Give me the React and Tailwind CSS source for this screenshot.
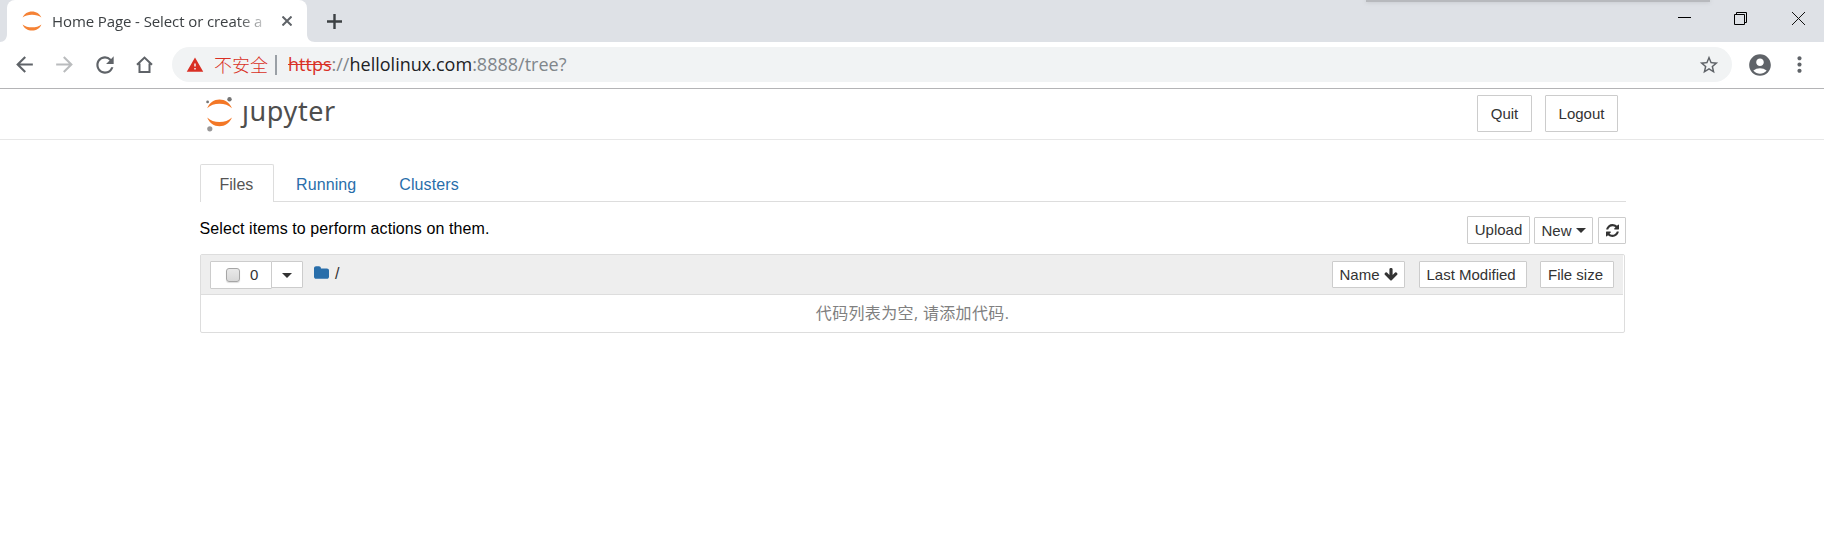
import React from "react";
import {
  MdArrowBack,
  MdArrowForward,
  MdRefresh,
  MdWarning,
  MdStarBorder,
  MdAccountCircle,
  MdMoreVert,
} from "react-icons/md";

const JupyterArcs = ({ className }) => (
  <svg viewBox="0 0 20 20" className={className} fill="#f58235">
    <path d="M0.6 6.6C2.2 2.6 5.8 0.4 10 0.4s7.8 2.2 9.4 6.2C17 4.6 13.800 3.700 10 3.700S3 4.600 0.600 6.600z" />
    <path d="M0.6 13.400C2.200 17.400 5.800 19.600 10 19.600s7.800-2.200 9.400-6.200C17 15.400 13.800 16.300 10 16.300S3 15.400 0.600 13.400z" />
  </svg>
);

const Caret = () => (
  <svg viewBox="0 0 10 5" className="mt-px h-[5px] w-[10px]" fill="#333">
    <path d="M0 0h10L5 5z" />
  </svg>
);

const Button = ({ className, children }) => (
  <button
    className={
      "flex shrink-0 items-center rounded-[1px] border border-[#ccc] bg-white text-[15px] leading-none text-[#333] " +
      className
    }
  >
    {children}
  </button>
);

function TabStrip() {
  return (
    <div className="relative flex h-[42px] bg-[#dee1e6]">
      <div className="absolute top-0 left-[1366px] h-[2px] w-[344px] bg-[#b7b9bd] shadow-[0_0_4px_#b7b9bd]" />
      <svg viewBox="0 0 7 8" className="mt-[34px] h-[8px] w-[7px]" fill="#fff">
        <path d="M7 0v8H0c4 0 7-3 7-8z" />
      </svg>
      <div className="flex h-[42px] w-[300px] items-center rounded-t-[8px] bg-white">
        <JupyterArcs className="ml-[15px] h-[20px] w-[20px]" />
        <div className="ml-[10px] w-[221px] overflow-hidden font-['Open_Sans',sans-serif] text-[15px] leading-[22px] tracking-[-0.1px] whitespace-nowrap text-[#3c4043] [mask-image:linear-gradient(to_right,#000_185px,transparent_221px)]">
          Home Page - Select or create a
        </div>
        <svg viewBox="0 0 10 10" className="ml-[9px] h-[10px] w-[10px]" stroke="#5f6368" strokeWidth="2">
          <path d="M0.500 0.500l9 9M9.500 0.500l-9 9" />
        </svg>
      </div>
      <svg viewBox="0 0 8 8" className="mt-[34px] h-[8px] w-[8px]" fill="#fff">
        <path d="M0 0v8h8C3 8 0 5 0 0z" />
      </svg>
      <svg viewBox="0 0 15 15" className="mt-[14px] ml-[12px] h-[15px] w-[15px]" stroke="#3c4043" strokeWidth="2.400">
        <path d="M7.500 0v15M0 7.500h15" />
      </svg>
      <div className="mt-[12px] mr-[19px] ml-auto flex">
        <svg viewBox="0 0 13 13" className="mr-[43px] h-[13px] w-[13px]" stroke="#000">
          <path d="M0 5.500h13" />
        </svg>
        <svg viewBox="0 0 13 13" className="mr-[45px] h-[13px] w-[13px]" fill="none" stroke="#000">
          <path d="M0.500 2.500h10v10h-10zM2.500 2.500v-2h10v10h-2" />
        </svg>
        <svg viewBox="0 0 13 13" className="h-[13px] w-[13px]" stroke="#111">
          <path d="M0 0l13 13M13 0L0 13" />
        </svg>
      </div>
    </div>
  );
}

function Toolbar() {
  return (
    <div className="flex h-[47px] items-center border-b border-[#b4b4b6] bg-white pb-[1px] text-[#5f6368]">
      <MdArrowBack className="ml-[12px] size-[25px]" />
      <MdArrowForward className="ml-[15px] size-[25px] text-[#babcbe]" />
      <MdRefresh className="ml-[15px] size-[26px]" />
      <svg viewBox="0 0 17 17" className="ml-[18px] h-[17px] w-[17px]" fill="none" stroke="#5f6368" strokeWidth="2">
        <path d="M1 8.800L8.500 1.600 16 8.800M3.500 7.500v8.500h10V7.500" />
      </svg>
      <div className="ml-[19px] flex h-[35px] w-[1560px] items-center rounded-full bg-[#f1f3f4] font-['Open_Sans','Noto_Sans_CJK_SC',sans-serif] text-[18px] leading-[24px] whitespace-nowrap">
        <MdWarning className="ml-[14px] size-[18px] text-[#d93025]" />
        <span className="ml-[10px] w-[54px] pb-[2px] font-['Noto_Sans_CJK_SC',sans-serif] font-light text-[#d93025]">不安全</span>
        <span className="ml-[7px] h-[20px] w-[2px] bg-[#9aa0a6]" />
        <div className="ml-[11px] pb-[2px] tracking-[0.010px] text-[#80868b]">
          <span className="text-[#d93025] line-through">https</span>://
          <span className="text-[#202124]">hellolinux.com</span>:8888/tree?
        </div>
        <MdStarBorder className="mr-[12px] ml-auto size-[22px]" />
      </div>
      <MdAccountCircle className="ml-[15px] size-[26px]" />
      <MdMoreVert className="ml-[14px] size-[25px]" />
    </div>
  );
}

function JupyterHeader() {
  return (
    <header className="flex h-[51px] border-b border-[#e7e7e7] pr-[205px] pl-[205px]">
      <svg viewBox="0 0 30 36" className="mt-[7px] h-[36px] w-[30px]">
        <g fill="#f37726">
          <path d="M2.200 12.200C4.500 6.500 9 3.500 14.500 3.500S24.500 6.500 27 12.200C23.500 9 19.500 7.700 14.500 7.700S5.500 9 2.200 12.200z" />
          <path d="M2.200 21.500C4.500 27.300 9 30.200 14.500 30.200S24.500 27.300 27 21.500C23.500 24.700 19.500 26 14.500 26S5.500 24.700 2.200 21.500z" />
        </g>
        <circle cx="24.500" cy="3.200" r="2.200" fill="#757575" />
        <circle cx="2.600" cy="5.900" r="1.400" fill="#757575" />
        <circle cx="4.800" cy="32.800" r="2.600" fill="#989798" />
      </svg>
      <div className="mt-[2px] ml-[4px] flex font-['Noto_Sans',sans-serif] text-[27px] leading-[40px] tracking-[0.600px] text-[#4e4e4e]">
        <span className="pl-[3px] [clip-path:inset(14px_0_0_0)]">j</span>
        <span>upyter</span>
      </div>
      <Button className="mt-[6px] mr-[13px] ml-auto h-[37px] w-[55px] justify-center">Quit</Button>
      <Button className="mt-[6px] mr-[1px] h-[37px] w-[73px] justify-center">Logout</Button>
    </header>
  );
}

function Tabs() {
  return (
    <nav className="mt-[24px] flex h-[38px] border-b border-[#ddd] text-[16px] leading-[39px] text-[#296eaa]">
      <div className="-mb-px h-[38px] w-[74px] rounded-t-[2px] border border-b-0 border-[#ddd] bg-white pl-[18.500px] text-[#555]">
        Files
      </div>
      <div className="ml-[22px] pt-px tracking-[0.100px]">Running</div>
      <div className="ml-[43px] pt-px tracking-[0.100px]">Clusters</div>
    </nav>
  );
}

function Actions() {
  return (
    <div className="flex h-[52px] items-start pt-[14px]">
      <div className="-ml-[0.500px] pt-[3px] text-[16px] leading-[20px] tracking-[0.090px] text-black">
        Select items to perform actions on them.
      </div>
      <Button className="ml-auto h-[28px] w-[63px] justify-center pb-px">Upload</Button>
      <Button className="mt-px ml-[4px] h-[27px] w-[59px] justify-center gap-[4px] pb-px">
        New <Caret />
      </Button>
      <Button className="mt-px ml-[5px] h-[27px] w-[28px] justify-center">
        <svg viewBox="0 0 1536 1536" className="h-[13px] w-[13px]" fill="#333">
          <path d="M1511 928q0 5-1 7-64 268-268 434.500t-478 166.500q-146 0-282.500-55t-243.500-157l-129 129q-19 19-45 19t-45-19-19-45v-448q0-26 19-45t45-19h448q26 0 45 19t19 45-19 45l-137 137q71 66 161 102t187 36q134 0 250-65t186-179q11-17 53-117 8-23 30-23h192q13 0 22.500 9.500t9.500 22.500zm25-800v448q0 26-19 45t-45 19h-448q-26 0-45-19t-19-45 19-45l138-138q-148-137-349-137-134 0-250 65t-186 179q-11 17-53 117-8 23-30 23h-199q-13 0-22.500-9.500t-9.500-22.500v-7q65-268 270-434.500t480-166.500q146 0 284 55.500t245 156.500l130-129q19-19 45-19t45 19 19 45z" />
        </svg>
      </Button>
    </div>
  );
}

function FileList() {
  return (
    <div className="h-[79px] w-[1425px] rounded-[2px] border border-[#ddd]">
      <div className="mr-px flex h-[40px] items-start border-b border-[#ddd] bg-[#eee] pt-[6px] pl-[9px]">
        <Button className="h-[28px] w-[62px] pb-px pl-[15px]">
          <span className="mr-[10px] h-[14px] w-[14px] rounded-[3px] border border-[#a6a6a6] bg-linear-to-b from-[#e9e9e9] to-[#d8d8d8] shadow-[0_1px_1px_#ddd]" />
          0
        </Button>
        <Button className="-ml-px h-[27px] w-[32px] justify-center">
          <Caret />
        </Button>
        <svg viewBox="64 128 1664 1408" className="mt-[5px] ml-[11px] h-[13px] w-[15px]" fill="#296eaa">
          <path d="M1728 608v704q0 92-66 158t-158 66h-1216q-92 0-158-66t-66-158v-960q0-92 66-158t158-66h320q92 0 158 66t66 158v32h672q92 0 158 66t66 158z" />
        </svg>
        <span className="mt-[3px] ml-[6px] text-[16px] leading-[20px] text-[#333]">/</span>
        <Button className="ml-auto h-[27px] w-[73px] justify-center gap-[4px]">
          Name
          <svg viewBox="53 128 1686 1536" className="h-[13px] w-[14px]" fill="#333">
            <path d="M1675 832q0 53-37 90l-651 652q-39 37-91 37-53 0-90-37l-651-652q-38-36-38-90 0-53 38-91l74-75q39-37 91-37 53 0 90 37l294 294v-704q0-52 38-90t90-38h128q52 0 90 38t38 90v704l294-294q37-37 90-37 52 0 91 37l75 75q37 39 37 91z" />
          </svg>
        </Button>
        <Button className="ml-[14px] h-[27px] w-[108px] pl-[6.500px]">Last Modified</Button>
        <Button className="mr-[9px] ml-[13px] h-[27px] w-[74px] pl-[7px]">File size</Button>
      </div>
      <div className="h-[37px] text-center font-['Open_Sans','Noto_Sans_CJK_SC',sans-serif] text-[16px] leading-[37px] tracking-[0.350px] text-[#808080]">
        代码列表为空, 请添加代码.
      </div>
    </div>
  );
}

export default function App() {
  return (
    <div className="h-[553px] w-[1824px] overflow-hidden bg-white font-['Liberation_Sans',Arial,sans-serif]">
      <TabStrip />
      <Toolbar />
      <JupyterHeader />
      <main className="ml-[200px] w-[1426px]">
        <Tabs />
        <Actions />
        <FileList />
      </main>
    </div>
  );
}
